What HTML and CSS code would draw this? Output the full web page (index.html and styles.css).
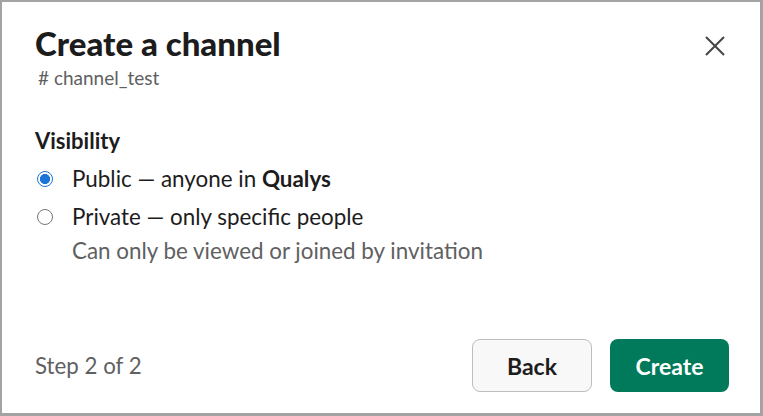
FILE: index.html
```html
<!DOCTYPE html>
<html>
<head>
<meta charset="utf-8">
<link rel="stylesheet" href="styles.css">
</head>
<body>
<div class="modal">
  <div class="header">
    <div class="titles">
      <h1 class="title">Create a channel</h1>
      <div class="subtitle"># channel_test</div>
    </div>
    <button class="close" aria-label="Close">
      <svg width="20" height="20" viewBox="0 0 20 20"><path d="M1 1L19 19M19 1L1 19" stroke="#454545" stroke-width="2" fill="none"/></svg>
    </button>
  </div>
  <div class="body">
    <div class="section-label">Visibility</div>
    <label class="option">
      <span class="radio checked"></span>
      <span class="opt-text">Public — anyone in <b>Qualys</b></span>
    </label>
    <label class="option">
      <span class="radio"></span>
      <span class="opt-text">Private — only specific people</span>
    </label>
    <div class="hint">Can only be viewed or joined by invitation</div>
  </div>
  <div class="footer">
    <div class="step">Step 2 of 2</div>
    <div class="actions">
      <button class="btn btn-back">Back</button>
      <button class="btn btn-create">Create</button>
    </div>
  </div>
</div>
</body>
</html>
```
FILE: styles.css
```css
html, body { margin: 0; padding: 0; background: #fff; }
body { font-family: Lato, "Noto Sans", sans-serif; color: #1d1c1d; }
.modal {
  box-sizing: border-box;
  width: 763px; height: 416px;
  border: 2px solid #a3a3a3;
  border-right-width: 3px; border-bottom-width: 3px;
  display: flex; flex-direction: column;
  padding: 0 33px 0 33px;
}
.header { display: flex; justify-content: space-between; align-items: flex-start; padding-top: 20px; }
.title { margin: 0; font-size: 33px; font-weight: 900; line-height: 42px; }
.subtitle { font-size: 19px; color: #616061; line-height: 26px; margin-left: 3px; margin-top: 1px; }
.close { background: none; border: 0; padding: 0; margin-top: 14px; margin-right: 2px; width: 20px; height: 20px; }
.close svg { display: block; }
.body { padding-top: 35px; }
.section-label { font-size: 22px; font-weight: 700; line-height: 30px; margin-bottom: 8px; }
.option { display: flex; align-items: center; font-size: 22.4px; line-height: 30px; height: 30px; margin-bottom: 8px; }
.radio { box-sizing: border-box; width: 16px; height: 16px; border-radius: 50%; border: 1.5px solid #767676; margin-left: 2px; margin-right: 19px; flex: none; }
.radio.checked { border: 1.5px solid #1d74d8; background: radial-gradient(circle, #1d74d8 0 4.8px, #fff 5.3px); }
.opt-text b { font-weight: 700; }
.hint { font-size: 22.4px; color: #616061; line-height: 30px; margin-left: 37px; margin-top: -4px; }
.footer { margin-top: auto; display: flex; justify-content: space-between; align-items: center; padding-bottom: 21px; }
.step { font-size: 22.3px; color: #616061; }
.actions { display: flex; gap: 18px; margin-right: -2px; }
.btn { font-family: Lato, sans-serif; font-size: 23px; font-weight: 700; height: 53px; border-radius: 8px; padding: 0; }
.btn-back { width: 120px; background: #f8f8f8; border: 1px solid #bdbdbd; color: #1d1c1d; }
.btn-create { width: 119px; background: #007a5a; border: 0; color: #fff; }
```
